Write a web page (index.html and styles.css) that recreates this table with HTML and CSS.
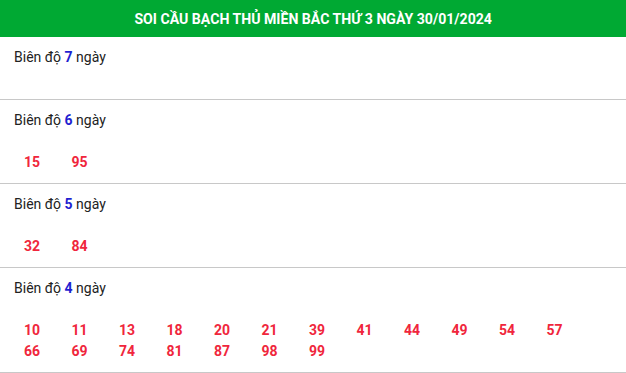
FILE: index.html
```html
<!DOCTYPE html>
<html lang="vi">
<head>
<meta charset="utf-8">
<title>Soi cầu bạch thủ</title>
<link rel="stylesheet" href="styles.css">
</head>
<body>
<div class="box">
  <div class="head"><h2 class="title">SOI CẦU BẠCH THỦ MIỀN BẮC THỨ 3 NGÀY 30/01/2024</h2></div>
  <div class="sec">
    <div class="label">Biên độ <b class="n">7</b> ngày</div>
    <div class="nums"></div>
  </div>
  <div class="sec">
    <div class="label">Biên độ <b class="n">6</b> ngày</div>
    <div class="nums"><span>15</span><span>95</span></div>
  </div>
  <div class="sec">
    <div class="label">Biên độ <b class="n">5</b> ngày</div>
    <div class="nums"><span>32</span><span>84</span></div>
  </div>
  <div class="sec">
    <div class="label">Biên độ <b class="n">4</b> ngày</div>
    <div class="nums"><span>10</span><span>11</span><span>13</span><span>18</span><span>20</span><span>21</span><span>39</span><span>41</span><span>44</span><span>49</span><span>54</span><span>57</span><span>66</span><span>69</span><span>74</span><span>81</span><span>87</span><span>98</span><span>99</span></div>
  </div>
</div>
</body>
</html>
```
FILE: styles.css
```css
html, body { margin: 0; padding: 0; background: #fff; }
body { font-family: Roboto, "Liberation Sans", Arial, sans-serif; color: #222; }
.box { width: 626px; }
.head {
  background: #00a933;
  height: 37px;
  display: flex;
  align-items: center;
  justify-content: center;
}
.title {
  margin: 0;
  color: #fff;
  font-size: 15px;
  font-weight: 700;
  display: inline-block;
  transform: scaleX(0.94);
  white-space: nowrap;
}
.sec {
  border-bottom: 1px solid #c8c8c8;
  padding: 10px 14px 10px;
}
.label { font-size: 14px; line-height: 21px; color: #222; }
.label .n { color: #1f1fd1; font-weight: 700; }
.nums {
  margin-top: 21px;
  padding-left: 10px;
  display: flex;
  flex-wrap: wrap;
}
.nums span {
  width: 47.5px;
  font-size: 14px;
  line-height: 21px;
  font-weight: 700;
  color: #f0263c;
}
```
